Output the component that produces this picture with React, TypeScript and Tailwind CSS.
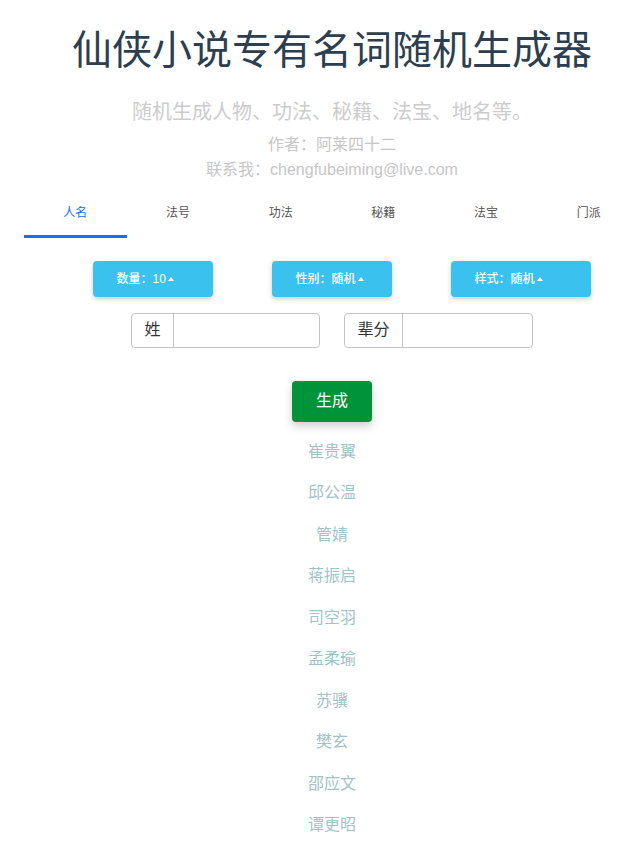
import React, { useState } from 'react';

const tabs = ['人名', '法号', '功法', '秘籍', '法宝', '门派'];

const names = ['崔贵翼', '邱公温', '管婧', '蒋振启', '司空羽', '孟柔瑜', '苏骥', '樊玄', '邵应文', '谭更昭'];

const options = [
  { label: '数量：10', width: 'w-[120px]' },
  { label: '性别：随机', width: 'w-[120px]' },
  { label: '样式：随机', width: 'w-[140px]' },
];

function Caret() {
  return (
    <span className="ml-[2px] inline-block h-0 w-0 border-x-[3.5px] border-b-[4px] border-x-transparent border-b-white align-middle" />
  );
}

function InputGroup({ label, labelWidth }: { label: string; labelWidth: string }) {
  return (
    <div className="flex h-[35px] w-[189px] rounded-[4px] border border-[#c4c4c4] bg-white">
      <span className={`flex ${labelWidth} shrink-0 items-center justify-center border-r border-[#c4c4c4] text-[16px] text-[#333]`}>
        {label}
      </span>
      <input className="min-w-0 flex-1 rounded-r-[4px] px-2 text-[14px] outline-none" />
    </div>
  );
}

export default function App() {
  const [active, setActive] = useState(0);

  return (
    <div
      className="w-full overflow-hidden bg-white"
      style={{ fontFamily: '"Liberation Sans", "Noto Sans CJK SC", sans-serif' }}
    >
      <div className="flex w-[664px] flex-col items-center pb-6">
        <h1 className="pt-[26px] text-[40px] leading-[48px] font-normal text-[#2c3e50]">仙侠小说专有名词随机生成器</h1>
        <p className="mt-[23px] text-[20px] leading-[30px] text-[#cccccc]">随机生成人物、功法、秘籍、法宝、地名等。</p>
        <p className="mt-[6px] text-[16px] leading-[24px] text-[#c6c6c6]">作者：阿莱四十二</p>
        <p className="mt-px text-[16px] leading-[24px] text-[#c6c6c6]">联系我：chengfubeiming@live.com</p>

        <div className="flex w-full px-[24px]">
          {tabs.map((t, i) => (
            <button
              key={t}
              onClick={() => setActive(i)}
              className="flex flex-1 flex-col items-center pt-[23px]"
            >
              <span className={`text-[12px] leading-4 ${i === active ? 'text-[#1a6cf0]' : 'text-[#555]'}`}>{t}</span>
              <span className={`mt-[14px] h-[2.5px] w-full ${i === active ? 'bg-[#1a6cf0]' : 'bg-transparent'}`} />
            </button>
          ))}
        </div>

        <div className="mt-[23px] grid w-[537px] grid-cols-3">
          {options.map((o) => (
            <div key={o.label} className="pl-[29px]">
              <button
                className={`flex h-[36px] ${o.width} items-center justify-start rounded-[4px] bg-[#3bc1ee] pl-[24px] text-[12px] font-medium text-white shadow-[0_2px_5px_rgba(0,0,0,0.2)]`}
              >
                {o.label}
                <Caret />
              </button>
            </div>
          ))}
        </div>

        <div className="mt-[16px] flex gap-[24px]">
          <InputGroup label="姓" labelWidth="w-[42px]" />
          <InputGroup label="辈分" labelWidth="w-[58px]" />
        </div>

        <button className="mt-[33px] h-[41px] w-[80px] rounded-[4px] bg-[#00933a] text-[16px] text-white shadow-[0_4px_10px_rgba(0,0,0,0.2)]">
          生成
        </button>

        <ul className="mt-[9px] flex flex-col items-center">
          {names.map((n) => (
            <li key={n} className="h-[41.5px] text-[16px] leading-[41.5px] text-[#9fc3c7]">
              {n}
            </li>
          ))}
        </ul>
      </div>
    </div>
  );
}
